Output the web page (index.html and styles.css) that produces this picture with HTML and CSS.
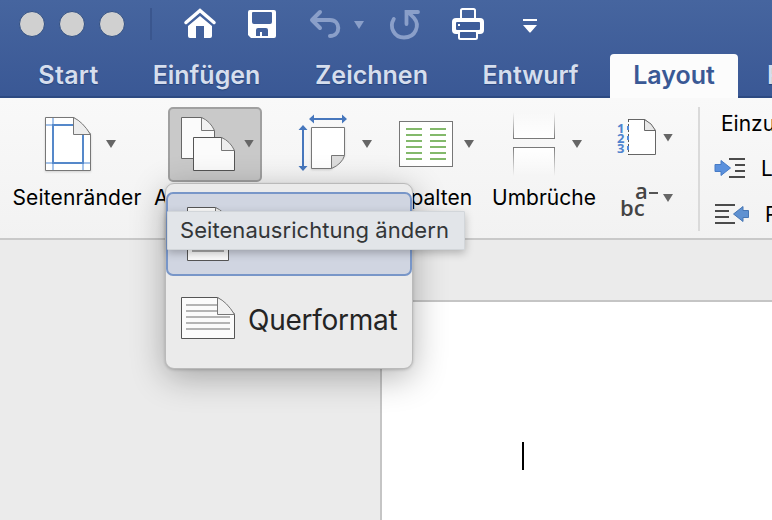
FILE: index.html
```html
<!DOCTYPE html>
<html lang="de">
<head>
<meta charset="utf-8">
<title>Layout</title>
<link rel="stylesheet" href="styles.css">
</head>
<body>
<header class="header">
  <div class="titlebar">
    <div class="lights"><i></i><i></i><i></i></div>
    <span class="title-divider"></span>
    <svg class="home" width="34" height="34" viewBox="183 7 34 34"><path d="M186 22.500L200 10.500L214 22.500" fill="none" stroke="#fff" stroke-width="3.500" stroke-linecap="round"/><path d="M188 26L200 16L212 26V36Q212 38 210 38H204V26H196V38H190Q188 38 188 36Z" fill="#fff"/></svg>
    <svg class="save" width="28" height="28" viewBox="248 10 28 28"><path fill="#fff" fill-rule="evenodd" d="M250 10H274Q276 10 276 12V36Q276 38 274 38H251L248 35V12Q248 10 250 10ZM252 13V22Q252 24 254 24H270Q272 24 272 22V13Q272 12 271 12H253Q252 12 252 13ZM256 36H260V32H262V36H268V30Q268 28 266 28H258Q256 28 256 30Z"/></svg>
    <svg class="undo" width="32" height="30" viewBox="309 9 32 30"><path d="M320 12L312 20L320 28M312.500 20H330C341 20 341 36 330 36" fill="none" stroke="#8a9fc9" stroke-width="4" stroke-linecap="round" stroke-linejoin="round"/></svg>
    <svg class="undo-arrow" width="10" height="8" viewBox="0 0 10 8"><path d="M0 0H10L5 8Z" fill="#8a9fc9"/></svg>
    <svg class="redo" width="32" height="32" viewBox="389 9 32 32"><path d="M393.800 19C389 27 394 37.500 404 37.500C416 37.500 420 25 414 18L408 12M406.500 24V12H418" fill="none" stroke="#8a9fc9" stroke-width="3.800" stroke-linecap="round"/></svg>
    <svg class="print" width="32" height="32" viewBox="452 8 32 32"><rect x="461" y="9" width="14" height="12" rx="1.500" fill="none" stroke="#fff" stroke-width="2"/><rect x="452" y="18" width="32" height="16" rx="4" fill="#fff"/><rect x="456" y="22" width="24" height="8" rx="1" fill="#3e5d9a"/><path d="M458 24h2v2h-2z" fill="#fff"/><rect x="459" y="31" width="18" height="8" rx="1.500" fill="#3e5d9a" stroke="#fff" stroke-width="2"/></svg>
    <svg class="more" width="14" height="14" viewBox="0 0 14 14"><path d="M0 0H14V2H0ZM0 6H14L7.500 13.500H6.500Z" fill="#fff"/></svg>
  </div>
  <nav class="tabs">
    <a class="tab start">Start</a><a class="tab insert">Einfügen</a><a class="tab draw">Zeichnen</a><a class="tab design">Entwurf</a><a class="tab active">Layout</a><a class="tab next">R</a>
  </nav>
</header>

<section class="ribbon">
  <div class="group margins">
    <div class="face">
      <svg width="50" height="60" viewBox="43 114 50 60"><g class="paper-shadow"><path d="M45.500 117.500H74L90.500 134V170.500H45.500Z" fill="#fff" stroke="#777"/></g><path d="M53 118V170M83 134V170M46 125H73M46 163H90" fill="none" stroke="#a5c3ea" stroke-width="2"/><path d="M73 125H53V163H83V134" fill="none" stroke="#5588ca" stroke-width="2"/><path d="M73.500 117.500V134.500H90.500Q83 122 73.500 117.500Z" fill="#ededed" stroke="#777"/></svg>
      <span class="caret"></span>
    </div>
    <div class="label">Seitenränder</div>
  </div>
  <div class="group orientation">
    <div class="face pressed">
      <svg width="58" height="59" viewBox="179 115 58 59"><path d="M181.500 117.500H202L214.500 130.500V158.500H181.500Z" fill="#fbfbfb" stroke="#666"/><path d="M201.500 117.500V130.500H214.500Q210 121 201.500 117.500Z" fill="#f2f2f2" stroke="#777"/><path d="M193.500 137.500H222L234.500 150.500V170.500H193.500Z" fill="#fbfbfb" stroke="#555"/><path d="M221.500 137.500V150.500H234.500Q230 141 221.500 137.500Z" fill="#eee" stroke="#777"/></svg>
      <span class="caret"></span>
    </div>
    <div class="label">Ausrichtung</div>
  </div>
  <div class="group size">
    <div class="face">
      <svg width="50" height="60" viewBox="298 114 50 60"><g class="paper-shadow"><path d="M311.500 127.500H344.500V155L331 168.500H311.500Z" fill="#fff" stroke="#777"/></g><path d="M331.500 168.500V155.500H344.500Q342 164 331.500 168.500Z" fill="#ddd" stroke="#777"/><path d="M313 119H343M303 130V166" stroke="#4777bd" stroke-width="2"/><path d="M309 119L314 114.500V123.500ZM347 119L342 114.500V123.500ZM303 125L298.500 130H307.500ZM303 171L298.500 166H307.500Z" fill="#4777bd"/></svg>
      <span class="caret"></span>
    </div>
    <div class="label">Format</div>
  </div>
  <div class="group columns">
    <div class="face">
      <svg width="54" height="46" viewBox="399 121 54 46"><rect x="399.500" y="121.500" width="53" height="45" fill="#fff" stroke="#777"/><path d="M406 129H422M406 135H422M406 141H422M406 147H422M406 153H422M406 159H422M430 129H446M430 135H446M430 141H446M430 147H446M430 153H446M430 159H446" stroke="#83b96b" stroke-width="2"/></svg>
      <span class="caret"></span>
    </div>
    <div class="label">Spalten</div>
  </div>
  <div class="group breaks">
    <div class="face">
      <svg width="42" height="64" viewBox="513 112 42 64"><defs><linearGradient id="up" x1="0" x2="0" y1="0" y2="1"><stop stop-color="#777" stop-opacity="0"/><stop offset="1" stop-color="#777"/></linearGradient><linearGradient id="down" x1="0" x2="0" y1="0" y2="1"><stop stop-color="#777"/><stop offset="1" stop-color="#777" stop-opacity="0"/></linearGradient><linearGradient id="fillup" x1="0" x2="0" y1="0" y2="1"><stop stop-color="#fff" stop-opacity="0"/><stop offset="1" stop-color="#fff"/></linearGradient><linearGradient id="filldown" x1="0" x2="0" y1="0" y2="1"><stop stop-color="#fff"/><stop offset="1" stop-color="#fff" stop-opacity="0"/></linearGradient></defs><path d="M513 112H555V138H513Z" fill="url(#fillup)"/><path d="M513 148H555V176H513Z" fill="url(#filldown)"/><path d="M513 112H514V138H554V112H555V139H513Z" fill="url(#up)"/><path d="M513 176V147H555V176H554V148H514V176Z" fill="url(#down)"/></svg>
      <span class="caret"></span>
    </div>
    <div class="label">Umbrüche</div>
  </div>
  <div class="small-tools">
    <div class="tool">
      <div class="digits"><span>1</span><span>2</span><span>3</span></div>
      <svg width="30" height="38" viewBox="627 118 30 38"><path d="M629 119.500H645L655.500 130.500V154.500H629Z" fill="#fff"/><path d="M629 119.500H645L655.500 130.500V154.500H629" fill="none" stroke="#666"/><path d="M628.500 119V155" stroke="#555" stroke-dasharray="3 2"/><path d="M628 126V130M628 136V140M628 146V150" stroke="#5289d8" stroke-width="2"/><path d="M644.500 119.500V130.500H655.500Q652 123 644.500 119.500Z" fill="#e8e8e8" stroke="#666"/></svg>
      <span class="caret"></span>
    </div>
    <div class="tool hyphen">
      <div class="hyphen-text"><span>a<i class="dash"></i></span><span>bc</span></div>
      <span class="caret"></span>
    </div>
  </div>
  <div class="indent">
    <div class="indent-title">Einzu</div>
    <div class="indent-row"><svg width="32" height="24" viewBox="714 156 32 24"><path d="M715 164.500H721V160.500L730.500 168L721 175.500V171.500H715Z" fill="#5b91dd" stroke="#477bc5" stroke-linejoin="round"/><path d="M729 159H745M735 165H745M735 171H745M729 177H745" stroke="#4b4b4b" stroke-width="2"/></svg><span>L</span></div>
    <div class="indent-row right"><svg width="36" height="24" viewBox="714 202 36 24"><path d="M748.500 210.500H743V206.500L733.500 214L743 221.500V217.500H748.500Z" fill="#5f91d1" stroke="#4776b4" stroke-linejoin="round"/><path d="M715 205H735M715 211H729M715 217H729M715 223H735" stroke="#4b4b4b" stroke-width="2"/></svg><span>R</span></div>
  </div>
</section>

<main class="workspace"><div class="page"><span class="cursor"></span></div></main>

<div class="menu">
  <div class="item selected"><svg width="44" height="56" viewBox="186 206 44 56"><path d="M187.500 207.500H216L228.500 220V260.500H187.500Z" fill="#fafafa" stroke="#555"/><path d="M215.500 207.500V220.500H228.500Q224 211 215.500 207.500Z" fill="#eee" stroke="#777"/><path d="M192 227H224M192 234H224M192 244H224M192 251H224" stroke="#aaa" stroke-width="2"/></svg></div>
  <div class="item"><svg width="56" height="44" viewBox="180 296 56 44"><path d="M181.500 297.500H218L234.500 314V338.500H181.500Z" fill="#fbfbfb" stroke="#555"/><path d="M186 305H217M186 311H217M186 317H230M186 323H230M186 329H230" stroke="#b4b4b4" stroke-width="2"/><path d="M217.500 297.500V314.500H234.500Q227 302 217.500 297.500Z" fill="#f1f1f1" stroke="#777"/></svg><span>Querformat</span></div>
</div>
<div class="tooltip">Seitenausrichtung ändern</div>
</body>
</html>
```
FILE: styles.css
```css
* { box-sizing: border-box; }
body {
  margin: 0;
  width: 772px;
  height: 520px;
  overflow: hidden;
  position: relative;
  background: #ebebeb;
  color: #000;
  font-family: Inter, "Liberation Sans", sans-serif;
}
svg { display: block; flex: none; overflow: visible; }
.header {
  height: 98px;
  overflow: hidden;
  background: linear-gradient(#46659f, #3a5895 96px, #2d4a82 96px);
}
.titlebar { display: flex; height: 50px; align-items: flex-start; padding-left: 19px; }
.lights { display: flex; gap: 14px; padding-top: 11px; }
.lights i { width: 26px; height: 26px; border-radius: 50%; background: #d0d0d0; border: 1.5px solid #314f83; }
.title-divider { width: 2px; height: 32px; margin: 8px 0 0 25px; background: #3a568e; }
.home { margin: 7px 0 0 31px; }
.save { margin: 10px 0 0 31px; }
.undo { margin: 9px 0 0 33px; }
.undo-arrow { margin: 21px 0 0 13px; }
.redo { margin: 9px 0 0 25px; }
.print { margin: 8px 0 0 31px; }
.more { margin: 19px 0 0 39px; }
.tabs { display: flex; height: 48px; padding: 4px 0 0 12px; }
.tab {
  flex: none;
  height: 44px;
  color: #d6deed;
  font-size: 25px;
  font-weight: 600;
  line-height: 43px;
  text-align: center;
  white-space: nowrap;
  text-shadow: 0 1px 1px #26437b;
}
.start { width: 113px; letter-spacing: .3px; }
.insert { width: 163px; }
.draw { width: 167px; }
.design { width: 151px; }
.active {
  width: 128px;
  margin: 0 4px;
  border-radius: 4px 4px 0 0;
  background: #fcfcfc;
  color: #3a5995;
  text-shadow: none;
}
.next { margin-left: 25px; }

.ribbon {
  display: flex;
  height: 142px;
  padding: 9px 0 0 6px;
  overflow: hidden;
  background: linear-gradient(#f9f9f9, #f2f2f2);
  border-bottom: 2px solid #c9c9c9;
}
.group { flex: none; }
.face { display: flex; height: 74px; margin-bottom: 1px; align-items: center; }
.label { height: 30px; font-size: 21px; line-height: 31px; text-align: center; white-space: nowrap; }
.caret { flex: none; width: 10px; height: 8px; background: #666; clip-path: polygon(0 0, 100% 0, 50% 100%); }
.paper-shadow { filter: drop-shadow(0 1px 1px rgba(0, 0, 0, .15)); }
.margins { width: 142px; }
.margins .label { letter-spacing: .15px; }
.margins .face { padding-left: 37px; gap: 13px; }
.orientation { width: 128px; margin-left: 6px; }
.orientation .face { width: 94px; height: 75px; margin: 0 0 0 14px; padding-left: 9px; gap: 7px; }
.orientation .face .caret { margin-top: -2px; }
.orientation .label { text-align: left; }
.pressed { border: 2px solid #a0a0a0; border-radius: 5px; background: #c9c9c9; }
.size { width: 100px; margin-left: 16px; }
.size .face { gap: 14px; }
.columns { width: 78px; margin-left: -1px; }
.columns .face { gap: 11px; margin-left: 2px; }
.columns .label { text-align: right; padding-right: 3px; }
.breaks { width: 106px; margin-left: 15px; }
.breaks .face { padding-left: 23px; gap: 17px; }
.breaks .label { padding-left: 2px; }
.small-tools { flex: none; width: 102px; padding-left: 21px; }
.tool { display: flex; height: 60px; align-items: center; }
.digits { width: 9px; margin: 2px 1px 0 0; display: flex; flex-direction: column; color: #4f83ce; font: 700 13px/10px "Open Sans", sans-serif; }
.tool svg + .caret { margin: 1px 0 0 6px; }
.hyphen-text { width: 38px; margin: 4px 5px 0 3px; display: flex; flex-direction: column; color: #444; font: 600 22px/17px "Open Sans", sans-serif; }
.hyphen-text span:first-child { display: flex; align-items: center; margin-left: 15px; }
.dash { width: 9px; height: 2px; margin: 5px 0 0 1px; background: #555; }
.hyphen-text + .caret { margin-top: 2px; }
.indent { width: 74px; height: 124px; flex: none; border-left: 2px solid #dadada; padding-left: 14px; font-size: 21px; white-space: nowrap; overflow: hidden; }
.indent-title { height: 38px; padding-left: 7px; line-height: 33px; }
.indent-row { display: flex; height: 46px; align-items: center; gap: 15px; }

.workspace { height: 280px; padding: 60px 0 0 380px; background: #ebebeb; }
.page { height: 220px; padding: 140px 0 0 140px; background: #fff; border: 2px solid #c5c5c5; border-right: 0; border-bottom: 0; }
.cursor { display: block; width: 2px; height: 28px; background: #000; }

.menu {
  position: absolute;
  left: 165px;
  top: 183px;
  width: 248px;
  height: 186px;
  padding: 8px 0;
  border: 1px solid #bababa;
  border-radius: 9px;
  background: #ebebeb;
  box-shadow: 0 8px 34px rgba(0, 0, 0, .3), 0 1px 3px rgba(0, 0, 0, .18);
}
.item { display: flex; height: 84px; align-items: center; padding-left: 14px; gap: 12px; color: #242424; font-size: 28px; letter-spacing: -.25px; }
.item span { margin-top: 4px; }
.selected { border: 2px solid #7896c8; border-radius: 7px; background: #d0d5e1; padding-left: 18px; }
.tooltip {
  position: absolute;
  left: 167px;
  top: 211px;
  width: 298px;
  height: 39px;
  padding-left: 12px;
  border: 1px solid #d2d6da;
  border-radius: 1px;
  background: #e2e5e9;
  box-shadow: 0 3px 9px rgba(0, 0, 0, .25);
  color: #333638;
  font-size: 22px;
  letter-spacing: .05px;
  line-height: 37px;
  white-space: nowrap;
}
```
